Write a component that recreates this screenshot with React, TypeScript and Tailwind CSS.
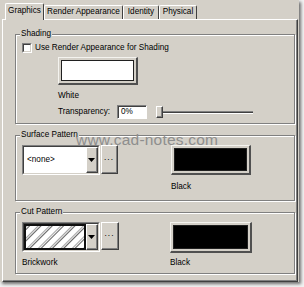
import type { ReactNode } from "react";

// classic win2k dialog colours
const face = "bg-[#d4d0c8]";

function GroupBox({ label, className, children }: { label: string; className: string; children: ReactNode }) {
  return (
    <div className={`relative border border-[#808080] shadow-[inset_1px_1px_0_#fff,1px_1px_0_#fff] ${className}`}>
      <span className={`absolute -top-[6px] left-[4px] px-[1px] leading-[10px] ${face}`}>{label}</span>
      {children}
    </div>
  );
}

function Raised({ className, children }: { className: string; children?: ReactNode }) {
  return (
    <div className={`border-t border-l border-white border-r border-b border-r-[#404040] border-b-[#404040] ${className}`}>
      <div className={`w-full h-full border-r border-b border-[#808080] ${face} flex items-center justify-center`}>
        {children}
      </div>
    </div>
  );
}

function Swatch({ color, className }: { color: string; className: string }) {
  return (
    <div className={`border-t border-l border-[#f4f3ef] border-r-2 border-b-2 border-r-[#505050] border-b-[#505050] ${face} p-[2px] ${className}`}>
      <div className={`w-full h-full border border-[#202020] ${color}`} />
    </div>
  );
}

function Arrow() {
  return (
    <svg width="7" height="4" viewBox="0 0 7 4">
      <path d="M0 0h7L3.5 4z" fill="#000" />
    </svg>
  );
}

function Hatch() {
  return (
    <svg width="100%" height="100%" className="block">
      <defs>
        <pattern id="brick" width="8" height="8" patternUnits="userSpaceOnUse" patternTransform="rotate(45)">
          <line x1="0" y1="0" x2="0" y2="8" stroke="#222" strokeWidth="0.8" />
          <line x1="2.4" y1="0" x2="2.4" y2="8" stroke="#222" strokeWidth="0.8" />
        </pattern>
      </defs>
      <rect width="100%" height="100%" fill="#fff" />
      <rect width="100%" height="100%" fill="url(#brick)" />
    </svg>
  );
}

function Combo({ children, selected }: { children: ReactNode; selected?: boolean }) {
  return (
    <div className="w-[78px] h-[30px] border-t border-l border-[#808080] border-r border-b border-r-white border-b-white">
      <div className="w-full h-full flex border-t border-l border-[#404040] border-r border-b border-r-[#d4d0c8] border-b-[#d4d0c8] bg-white">
        <div className={`flex-1 flex items-center ${selected ? "border-2 border-[#101010]" : "pl-[3px]"}`}>{children}</div>
        <Raised className="w-[12px] h-full">
          <Arrow />
        </Raised>
      </div>
    </div>
  );
}

export default function App() {
  return (
    <div className="w-[304px] h-[287px] bg-[#f2f2f2] font-['Liberation_Sans',Arial,sans-serif] text-[8.2px] text-black relative overflow-hidden">
      <div className={`w-[299px] h-[282px] ${face} shadow-[2px_2px_3px_rgba(0,0,0,0.55)] pt-[3px] pl-[2px] flex flex-col`}>
        {/* tab strip */}
        <div className="h-[16px] flex items-end pl-[3px]">
          <div className={`relative z-10 -mb-px h-[17px] w-[39px] ${face} border-t border-l border-white border-r border-r-[#404040] rounded-t-[2px] flex items-center justify-center pb-[2px]`}>
            Graphics
          </div>
          {["Render Appearance", "Identity", "Physical"].map((t, i) => (
            <div
              key={t}
              className={`h-[14px] ${i === 0 ? "w-[79px]" : i === 1 ? "w-[36px]" : "w-[38px]"} border-t border-l border-white border-r border-r-[#404040] rounded-t-[2px] flex items-center justify-center`}
            >
              {t}
            </div>
          ))}
        </div>

        {/* tab panel */}
        <div className="w-[296px] flex-1 border-t border-l border-white border-r border-b border-r-[#404040] border-b-[#404040]">
          <div className="h-full border-r border-b border-[#808080] pl-[12px] pr-[1px] pt-[14px] flex flex-col">
            <GroupBox label="Shading" className="h-[90px] pl-[6px] pt-[8px]">
              <div className="flex items-center gap-[3px] h-[10px]">
                <div className="w-[10px] h-[10px] border-t border-l border-[#808080] border-r border-b border-r-white border-b-white">
                  <div className="w-full h-full bg-white border-t border-l border-[#404040] border-r border-b border-r-[#d4d0c8] border-b-[#d4d0c8]" />
                </div>
                <span className="leading-[10px]">Use Render Appearance for Shading</span>
              </div>
              <div className="ml-[36px] mt-[4px]">
                <Swatch color="bg-white" className="w-[80px] h-[28px]" />
                <div className="mt-[6px] leading-[10px]">White</div>
                <div className="mt-[4px] flex items-center h-[14px]">
                  <span className="w-[59px]">Transparency:</span>
                  <div className="w-[30px] h-[14px] border-t border-l border-[#808080] border-r border-b border-r-white border-b-white">
                    <div className="w-full h-full bg-white border-t border-l border-[#404040] pl-[2px] flex items-center">0%</div>
                  </div>
                  <div className="relative ml-[9px] w-[97px] h-[12px] flex items-center">
                    <div className="w-full h-[3px] border-t border-[#808080] border-b border-b-white bg-[#404040]" />
                    <Raised className="absolute left-0 top-0 w-[7px] h-[12px]" />
                  </div>
                </div>
              </div>
            </GroupBox>

            <GroupBox label="Surface Pattern" className="mt-[11px] h-[66px] pl-[6px] pt-[9px]">
              <div className="flex items-start">
                <Combo>
                  <span>&lt;none&gt;</span>
                </Combo>
                <Raised className="ml-[1px] w-[17px] h-[29px]">
                  <span className="tracking-[1px] -mt-[2px]">...</span>
                </Raised>
                <div className="ml-[53px]">
                  <Swatch color="bg-black" className="w-[80px] h-[30px]" />
                  <div className="mt-[7px] leading-[10px]">Black</div>
                </div>
              </div>
            </GroupBox>

            <GroupBox label="Cut Pattern" className="mt-[11px] h-[62px] pl-[6px] pt-[9px]">
              <div className="flex items-start">
                <div>
                  <div className="flex items-start">
                    <Combo selected>
                      <Hatch />
                    </Combo>
                    <Raised className="ml-[1px] w-[18px] h-[28px]">
                      <span className="tracking-[1px] -mt-[2px]">...</span>
                    </Raised>
                  </div>
                  <div className="mt-[6px] leading-[10px]">Brickwork</div>
                </div>
                <div className="ml-[51px]">
                  <Swatch color="bg-black" className="w-[82px] h-[31px]" />
                  <div className="mt-[5px] leading-[10px]">Black</div>
                </div>
              </div>
            </GroupBox>
          </div>
        </div>
      </div>

      {/* watermark overlay */}
      <span className="absolute left-[76px] top-[131px] text-[15.5px] leading-[18px] text-[#8e8e8e] tracking-[0.2px]">
        www.cad-notes.com
      </span>
    </div>
  );
}
